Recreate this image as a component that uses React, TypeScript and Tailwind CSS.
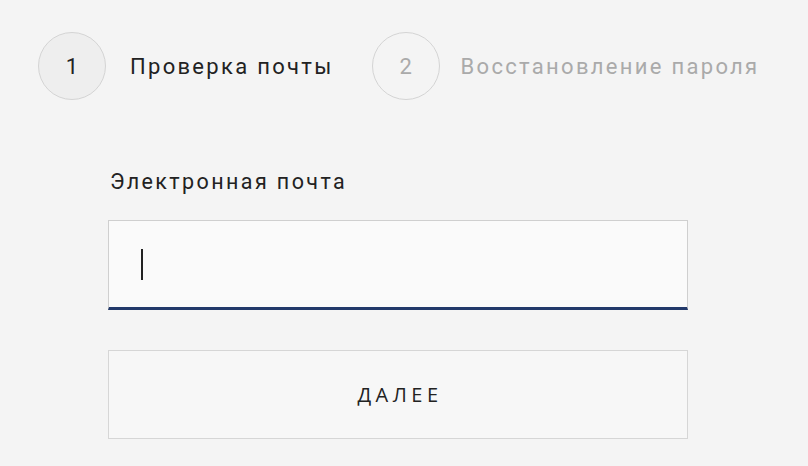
import React from "react";

const font = { fontFamily: "Roboto, 'Noto Sans', sans-serif" };

export default function App() {
  return (
    <div
      className="w-[808px] h-[466px] bg-[#f4f4f4] overflow-hidden"
      style={font}
    >
      <div className="flex items-center pt-[32px] pl-[38px]">
        <div className="w-[68px] h-[68px] rounded-full border border-[#d4d4d4] bg-[#eeeeee] flex items-center justify-center text-[22px] text-[#222]">
          1
        </div>
        <div className="ml-[24px] text-[22px] tracking-[2.3px] text-[#222]">
          Проверка почты
        </div>
        <div className="ml-[38px] w-[68px] h-[68px] rounded-full border border-[#d4d4d4] flex items-center justify-center text-[22px] text-[#aaa]">
          2
        </div>
        <div className="ml-[21px] text-[22px] tracking-[2.3px] text-[#aaa]">
          Восстановление пароля
        </div>
      </div>

      <div className="pl-[108px] w-[688px]">
        <div className="mt-[70px] pl-[2px] text-[21.5px] leading-[24px] tracking-[2.4px] text-[#222]">
          Электронная почта
        </div>
        <div className="mt-[26px] h-[90px] bg-[#fafafa] border border-[#cfcfcf] border-b-[3px] border-b-[#22396a] flex items-center pl-[32px]">
          <div className="w-[2px] h-[31px] bg-[#222]" />
        </div>
        <button
          className="mt-[40px] w-full h-[89px] border border-[#d6d6d6] bg-[#f7f7f7] text-[20px] tracking-[4.5px] text-[#222] pl-[4px]"
          style={{ fontFamily: "'Open Sans', sans-serif" }}
        >
          ДАЛЕЕ
        </button>
      </div>
    </div>
  );
}
